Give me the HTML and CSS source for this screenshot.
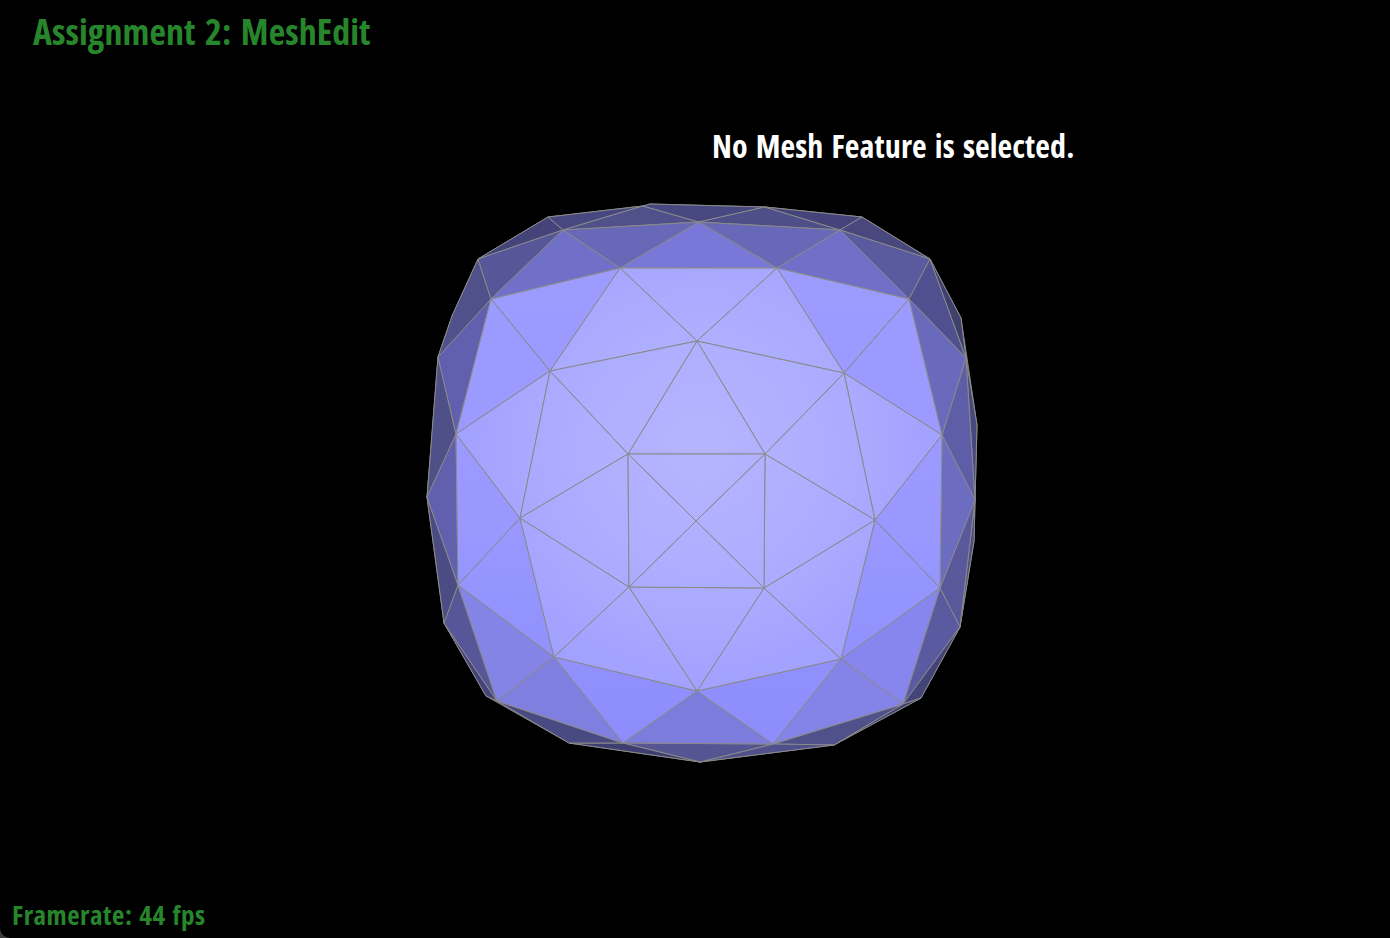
FILE: index.html
```html
<!DOCTYPE html>
<html lang="en">
<head>
  <meta charset="UTF-8" />
  <title>Assignment 2: MeshEdit</title>
  <link rel="stylesheet" href="styles.css">
</head>
<body>
  <h1 class="title">Assignment 2: MeshEdit</h1>

  <p class="status">No Mesh Feature is selected.</p>

  <svg class="mesh" viewBox="0 0 1390 938" aria-hidden="true">
    <defs>
      <radialGradient id="front" gradientUnits="userSpaceOnUse" cx="700" cy="450" r="270">
        <stop offset="0" stop-color="#b4b4ff"/>
        <stop offset="0.45" stop-color="#aeaeff"/>
        <stop offset="1" stop-color="#9e9eff"/>
      </radialGradient>
      <linearGradient id="outer" gradientUnits="userSpaceOnUse" x1="0" y1="268" x2="0" y2="744">
        <stop offset="0" stop-color="#9c9cff"/>
        <stop offset="0.55" stop-color="#9898ff"/>
        <stop offset="1" stop-color="#8c8cfc"/>
      </linearGradient>
    </defs>

    <!-- silhouette, the back faces that show past the rim -->
    <polygon class="back" points="548,217 643,206 650,204 765,207 862,217 930,259 961,318 977,425 974,541 960,627 921,698 834,745 700,762 569,743 486,696 444,623 427,497 438,357 452,316 478,259"/>

    <!-- rim -->
    <g class="faces">
      <polygon fill="#44447a" points="478,259 548,217 563,230"/>
      <polygon fill="#484880" points="548,217 643,206 563,230"/>
      <polygon fill="#50508a" points="563,230 643,206 699,222"/>
      <polygon fill="#484880" points="643,206 650,204 765,207 699,222"/>
      <polygon fill="#4e4e88" points="699,222 765,207 840,230"/>
      <polygon fill="#44447a" points="765,207 862,217 840,230"/>
      <polygon fill="#48487e" points="840,230 862,217 930,259"/>
      <polygon fill="#5a5a9e" points="840,230 930,259 909,299"/>
      <polygon fill="#505090" points="909,299 930,259 966,358"/>
      <polygon fill="#40406e" points="930,259 961,318 966,358"/>
      <polygon fill="#484880" points="966,358 977,425 975,500"/>
      <polygon fill="#5e5ea8" points="942,435 966,358 975,500"/>
      <polygon fill="#4c4c84" points="975,500 974,541 960,627"/>
      <polygon fill="#58589a" points="940,588 975,500 960,627"/>
      <polygon fill="#5a5aa0" points="940,588 960,627 903,704"/>
      <polygon fill="#44447a" points="903,704 960,627 921,698"/>
      <polygon fill="#3e3e70" points="903,704 921,698 834,745"/>
      <polygon fill="#50508a" points="773,744 834,745 903,704"/>
      <polygon fill="#50508c" points="773,744 700,762 834,745"/>
      <polygon fill="#555594" points="623,743 700,762 773,744"/>
      <polygon fill="#3e3e70" points="623,743 569,743 700,762"/>
      <polygon fill="#4a4a82" points="497,701 569,743 623,743"/>
      <polygon fill="#44447a" points="444,623 486,696 497,701"/>
      <polygon fill="#565698" points="458,585 444,623 497,701"/>
      <polygon fill="#4c4c84" points="427,497 444,623 458,585"/>
      <polygon fill="#6060ae" points="456,434 427,497 458,585"/>
      <polygon fill="#505088" points="456,434 438,357 427,497"/>
      <polygon fill="#6060ae" points="456,434 491,299 438,357"/>
      <polygon fill="#50508a" points="491,299 478,259 452,316 438,357"/>
      <polygon fill="#565698" points="491,299 563,230 478,259"/>
    </g>

    <!-- bevel between the rim and the front -->
    <g class="faces">
      <polygon fill="#7070c8" points="491,299 563,230 620,268"/>
      <polygon fill="#6868b8" points="620,268 563,230 699,222"/>
      <polygon fill="#7878d8" points="620,268 699,222 777,268"/>
      <polygon fill="#6868b8" points="777,268 699,222 840,230"/>
      <polygon fill="#7070c8" points="777,268 840,230 909,299"/>
      <polygon fill="#6a6abc" points="909,299 966,358 942,435"/>
      <polygon fill="#6c6cc0" points="942,435 975,500 940,588"/>
      <polygon fill="#8484e8" points="841,659 903,704 773,744"/>
      <polygon fill="#8686ee" points="841,659 940,588 903,704"/>
      <polygon fill="#7c7cdc" points="697,691 623,743 773,744"/>
      <polygon fill="#7f7fdf" points="554,657 497,701 623,743"/>
      <polygon fill="#8484e6" points="554,657 458,585 497,701"/>
    </g>

    <!-- outer ring of the front -->
    <g class="faces" fill="url(#outer)">
      <polygon points="491,299 620,268 550,371"/>
      <polygon points="777,268 909,299 844,373"/>
      <polygon points="909,299 942,435 844,373"/>
      <polygon points="942,435 940,588 875,520"/>
      <polygon points="940,588 841,659 875,520"/>
      <polygon points="841,659 773,744 697,691"/>
      <polygon points="697,691 623,743 554,657"/>
      <polygon points="458,585 554,657 520,518"/>
      <polygon points="456,434 458,585 520,518"/>
      <polygon points="491,299 550,371 456,434"/>
    </g>

    <!-- front -->
    <g class="faces" fill="url(#front)">
      <polygon points="620,268 777,268 697,341"/>
      <polygon points="620,268 697,341 550,371"/>
      <polygon points="777,268 844,373 697,341"/>
      <polygon points="942,435 875,520 844,373"/>
      <polygon points="456,434 550,371 520,518"/>
      <polygon points="554,657 629,587 520,518"/>
      <polygon points="554,657 697,691 629,587"/>
      <polygon points="697,691 841,659 764,588"/>
      <polygon points="841,659 875,520 764,588"/>
      <polygon points="875,520 844,373 765,454"/>
      <polygon points="875,520 765,454 764,588"/>
      <polygon points="844,373 697,341 765,454"/>
      <polygon points="697,341 628,454 765,454"/>
      <polygon points="697,341 550,371 628,454"/>
      <polygon points="550,371 520,518 628,454"/>
      <polygon points="520,518 629,587 628,454"/>
      <polygon points="697,691 629,587 764,588"/>
      <polygon points="628,454 765,454 696,521"/>
      <polygon points="765,454 764,588 696,521"/>
      <polygon points="764,588 629,587 696,521"/>
      <polygon points="629,587 628,454 696,521"/>
    </g>
  </svg>

  <p class="framerate">Framerate: 44 fps</p>
</body>
</html>
```

FILE: styles.css
```css
html {
  height: 100%;
  background-color: #3c3c3c;
}

body {
  background-color: #000;
  border-bottom-left-radius: 10px;
  height: 100%;
  margin: 0;
  font-family: "Open Sans", "Noto Sans", sans-serif;
  font-weight: 700;
  font-stretch: 75%;
  overflow: hidden;
  display: flex;
  flex-direction: column;
  position: relative;
}

.title {
  color: #27862b;
  font-size: 36px;
  line-height: 46px;
  font-weight: 700;
  letter-spacing: 0.05px;
  word-spacing: 3px;
  margin: 9px 0 0 33px;
}

.status {
  color: #fff;
  font-size: 32px;
  line-height: 40px;
  letter-spacing: 0.1px;
  word-spacing: 2.2px;
  margin: 71px 0 0 712px;
}

.framerate {
  color: #27862b;
  font-size: 27px;
  line-height: 34px;
  letter-spacing: 0.5px;
  word-spacing: 1.5px;
  margin: auto 0 6px 12px;
}

.mesh {
  position: absolute;
  left: 0;
  top: 0;
  width: 1390px;
  height: 938px;
}

.back {
  fill: #3e3e70;
  stroke: #8a8a8a;
  stroke-width: 1;
}

.faces polygon {
  stroke: #8a8a8a;
  stroke-width: 1;
  stroke-linejoin: round;
}
```
